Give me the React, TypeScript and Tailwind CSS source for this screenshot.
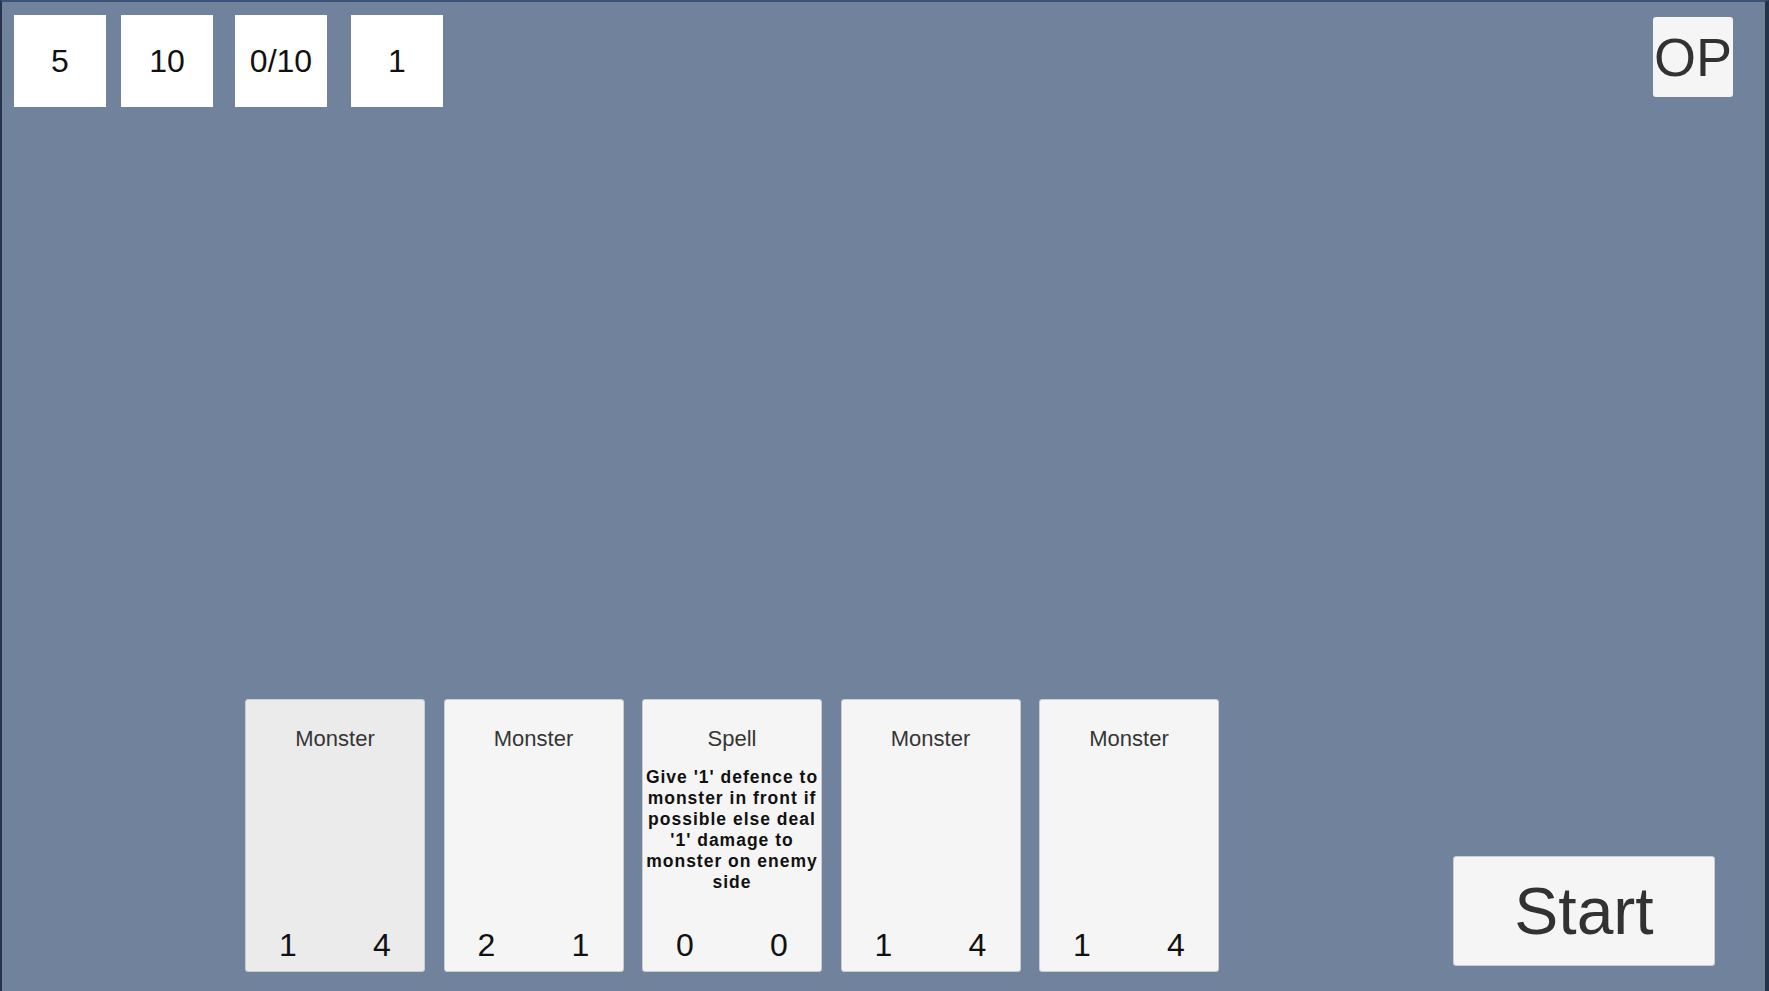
import React from "react";

type Card = { title: string; desc?: string; a: number; b: number; dim?: boolean };

const cards: Card[] = [
  { title: "Monster", a: 1, b: 4, dim: true },
  { title: "Monster", a: 2, b: 1 },
  {
    title: "Spell",
    desc: "Give '1' defence to monster in front if possible else deal '1' damage to monster on enemy side",
    a: 0,
    b: 0,
  },
  { title: "Monster", a: 1, b: 4 },
  { title: "Monster", a: 1, b: 4 },
];

function StatBox({ v, cls }: { v: string; cls: string }) {
  return (
    <div
      className={`w-[92px] h-[92px] bg-white flex items-center justify-center text-[32px] leading-none text-[#111] ${cls}`}
    >
      {v}
    </div>
  );
}

function CardView({ c }: { c: Card }) {
  return (
    <div
      className={`w-[180px] h-[273px] rounded-[3px] border border-[#c9ccd2] flex flex-col items-center ${
        c.dim ? "bg-[#ebebeb]" : "bg-[#f5f5f5]"
      }`}
    >
      <div className="pt-[26px] text-[22px] leading-[26px] text-[#353535]">{c.title}</div>
      {c.desc && (
        <div className="mt-[15px] px-[1px] text-center font-bold text-[17.5px] leading-[21px] tracking-[1px] text-[#111]">
          {c.desc}
        </div>
      )}
      <div className="mt-auto w-full flex justify-between px-[22px] pb-[8px] text-[32px] leading-[36px] text-[#111]">
        <span className="w-[40px] text-center">{c.a}</span>
        <span className="w-[40px] text-center">{c.b}</span>
      </div>
    </div>
  );
}

export default function App() {
  return (
    <div
      className="w-[1769px] h-[991px] bg-[#71829c] flex flex-col border-l-[2px] border-l-[#26334a] border-t-[2px] border-t-[#3b5278] border-r-[4px] border-r-[#253349] overflow-hidden"
      style={{ fontFamily: '"Liberation Sans", Arial, sans-serif' }}
    >
      <div className="flex items-start pt-[13px]">
        <StatBox v="5" cls="ml-[12px]" />
        <StatBox v="10" cls="ml-[15px]" />
        <StatBox v="0/10" cls="ml-[22px]" />
        <StatBox v="1" cls="ml-[24px]" />
        <div className="ml-auto mr-[32px] mt-[2px] w-[80px] h-[80px] rounded-[3px] bg-[#f5f5f5] flex items-center justify-center text-[54px] leading-none text-[#323232]">
          OP
        </div>
      </div>
      <div className="mt-auto flex items-end pb-[19px]">
        <div className="ml-[243px] flex gap-[18.5px]">
          {cards.map((c, i) => (
            <CardView key={i} c={c} />
          ))}
        </div>
        <div className="ml-auto mr-[50px] mb-[6px] w-[262px] h-[110px] rounded-[3px] bg-[#f5f5f5] border border-[#c9ccd2] flex items-center justify-center text-[66px] text-[#323232]">
          Start
        </div>
      </div>
    </div>
  );
}
